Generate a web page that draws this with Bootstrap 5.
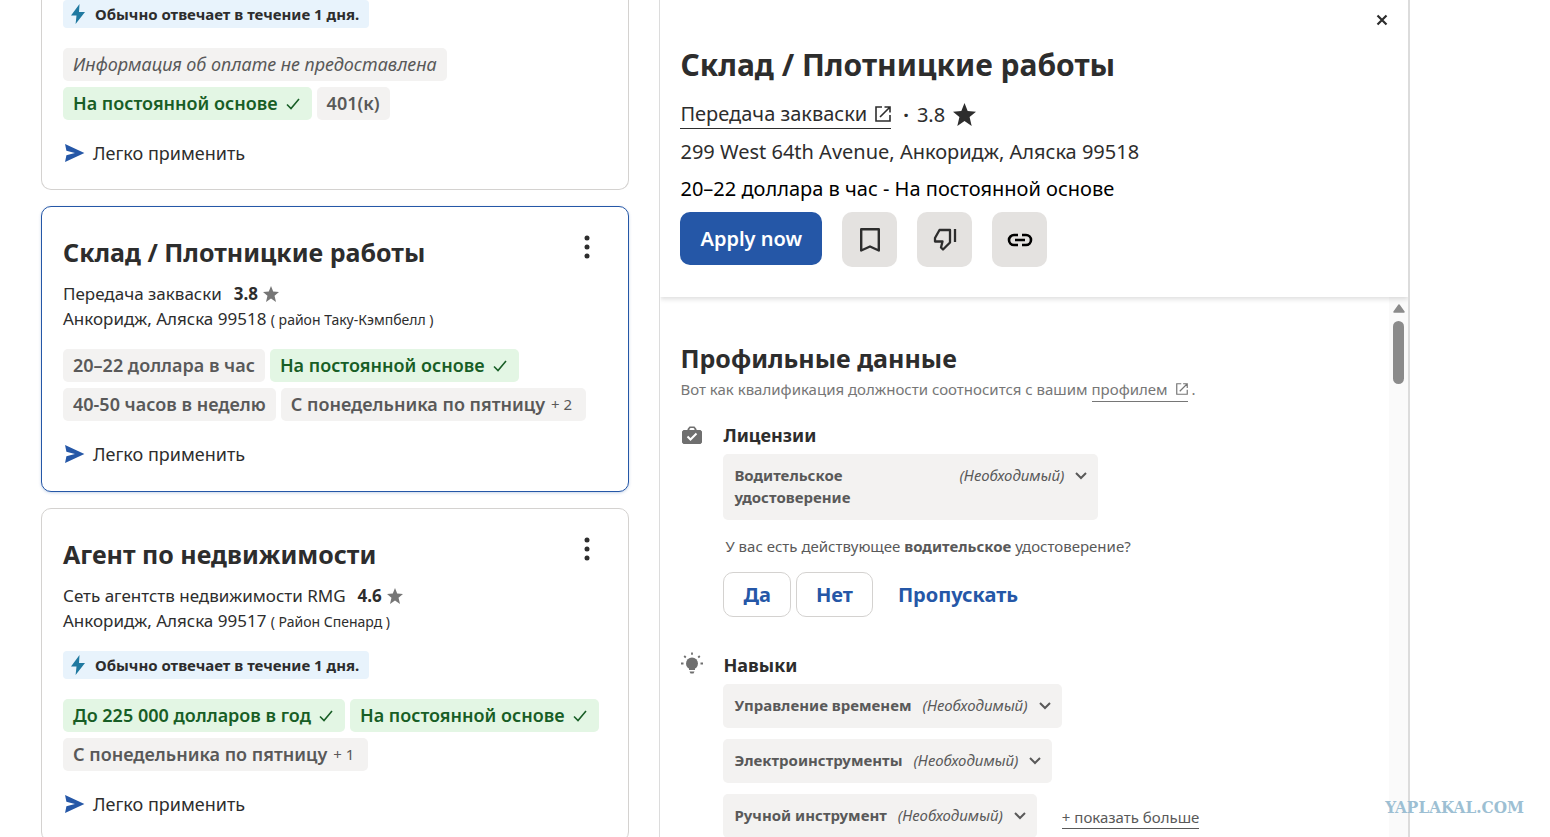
<!DOCTYPE html>
<html lang="ru">
<head>
<meta charset="utf-8">
<meta name="viewport" content="width=device-width, initial-scale=1">
<title>Вакансии</title>
<link href="https://cdn.jsdelivr.net/npm/bootstrap@5.3.0/dist/css/bootstrap.min.css" rel="stylesheet">
<style>
  :root { --ink: #2d2d2d; --soft: #595959; --line: #d4d2d0; --brand: #2557a7; --chip: #f3f2f1; }
  body { font-family: "Noto Sans", "Open Sans", sans-serif; color: var(--ink); background: #fff; }
  svg { flex: none; display: block; }
  h1, h2, h3, p { margin: 0; }
  .jobs-page { height: 100vh; overflow: hidden; display: grid; grid-template-columns: 588fr 750fr; column-gap: 30px; padding: 0 140px 0 41px; }
  .job-list { display: flex; flex-direction: column; gap: 16px; min-width: 0; }
  .job-card { flex: none; border: 1px solid var(--line); border-radius: 10px; padding: 26px 21px 24px; background: #fff; }
  .job-card.is-cut { border-top: 0; border-radius: 0 0 10px 10px; padding-top: 0; padding-bottom: 23px; }
  .job-card.is-active { border-color: var(--brand); box-shadow: 0 1px 3px rgba(37, 87, 167, .25); }
  .job-title { font-size: 25px; line-height: 38px; font-weight: 700; margin-bottom: 10px; }
  .company { font-size: 17px; line-height: 25px; }
  .company b { margin: 0 5px 0 12px; }
  .district { font-size: 14px; }
  .kebab { width: 40px; height: 28px; padding: 0; border: 0; background: none; display: flex; justify-content: center; align-items: center; color: var(--ink); }
  .reply { display: flex; width: fit-content; align-items: center; gap: 8px; height: 28px; padding: 0 10px 0 6px; border-radius: 4px; background: #e8f3fc; font-size: 15px; font-weight: 700; }
  .company + .reply, .company + .tags { margin-top: 17px; }
  .tags { display: flex; flex-wrap: wrap; gap: 6px 5px; }
  .reply + .tags { margin-top: 20px; }
  .tag { display: inline-flex; align-items: center; height: 33px; padding: 0 10px; border-radius: 5px; background: var(--chip); color: var(--soft); font-size: 18px; font-weight: 600; white-space: nowrap; }
  .tag.match { background: #e3f6e4; color: #185e26; }
  .tag svg { margin: 0 2px 0 8px; }
  .tag .more { font-size: 15px; font-weight: 400; margin: 0 4px 0 6px; }
  .tag.unpaid { font-style: italic; font-weight: 400; }
  .easy { display: flex; align-items: center; gap: 7px; margin-top: 20px; font-size: 18px; line-height: 26px; }
  .detail { display: flex; flex-direction: column; min-width: 0; border: solid #dcdcdc; border-width: 0 2px 0 1px; }
  .detail-head { position: relative; z-index: 1; flex: none; padding: 42px 20px 30px; box-shadow: 0 2px 5px rgba(0, 0, 0, .14); clip-path: inset(0 0 -10px 0); }
  .detail-title { font-size: 30px; line-height: 46px; font-weight: 700; margin-bottom: 12px; }
  .detail-line { font-size: 20px; line-height: 28px; margin-bottom: 9px; }
  .underlined { display: inline-flex; align-items: center; color: inherit; text-decoration: none; border-bottom: 1px solid currentColor; }
  .close-btn { position: absolute; top: 8px; right: 14px; width: 24px; height: 24px; border: 0; padding: 0; background: none; display: flex; align-items: center; justify-content: center; }
  .actions { display: flex; gap: 20px; }
  .apply { height: 53px; padding: 0 20px; border: 0; border-radius: 10px; background: var(--brand); color: #fff; font-size: 20px; font-weight: 600; }
  .tool { width: 55px; height: 55px; padding: 0; border: 0; border-radius: 10px; background: #e4e2e0; color: var(--ink); display: flex; align-items: center; justify-content: center; }
  .detail-body { flex: 1; min-height: 0; display: flex; overflow: hidden; }
  .profile { flex: 1; min-width: 0; padding: 42px 20px 0; }
  .rail { flex: none; width: 19px; background: #fafafa; padding-top: 7px; display: flex; flex-direction: column; align-items: center; gap: 8px; }
  .rail-thumb { width: 11px; height: 63px; border-radius: 6px; background: #8b8b8b; }
  .profile-title { font-size: 25px; line-height: 38px; font-weight: 700; }
  .hint { font-size: 15px; line-height: 24px; color: #767676; }
  .group { display: flex; gap: 20px; margin-top: 20px; }
  .group + .group { margin-top: 35px; }
  .group-icon { width: 23px; display: flex; justify-content: center; }
  .group-name { font-size: 18px; line-height: 26px; font-weight: 700; margin-bottom: 6px; }
  .need-list { display: grid; gap: 11px; }
  .need { display: flex; align-items: flex-start; width: fit-content; min-height: 44px; padding: 10px 11px 12px; border: 0; border-radius: 5px; background: var(--chip); color: var(--soft); font-size: 15px; line-height: 22px; text-align: left; }
  .need b { font-weight: 700; margin-right: 11px; }
  .need svg { margin: 8px 0 0 11px; }
  .need.wide { width: 375px; }
  .need.wide b { width: 140px; margin-right: auto; }
  .question { font-size: 15px; line-height: 22px; color: var(--soft); padding-left: 2px; margin: 15px 0; }
  .answers { display: flex; gap: 5px; }
  .answer { height: 45px; padding: 0 19px; border: 1px solid var(--line); border-radius: 10px; background: #fff; color: var(--brand); font-size: 20px; font-weight: 700; }
  .answer.plain { border-color: transparent; }
  .more-link { font-size: 15px; line-height: 22px; color: var(--soft); margin: 2px 0 0 25px; }
  .watermark { position: absolute; right: 26px; bottom: 19px; font: 700 17px/22px "DejaVu Serif Condensed", "DejaVu Serif", serif; color: #9dbfd3; }
</style>
</head>
<body>
<svg width="0" height="0" class="position-absolute">
  <symbol id="bolt" viewBox="0 0 16 20"><path d="M9.5 0 1 11.5h5.5L5.600 20 15 8H9z" fill="#2079a0"/></symbol>
  <symbol id="check" viewBox="0 0 14 12"><path d="M1 6.500 5 10.500 13 1" fill="none" stroke="currentColor" stroke-width="1.600"/></symbol>
  <symbol id="plane" viewBox="0 0 22 20"><path d="M.5 0 22 10 .5 20 2 12.500 11.500 10 2 7.500z" fill="#2557a7"/></symbol>
  <symbol id="star" viewBox="0 0 24 24"><path d="m12 0 3.300 8.300 8.700.7-6.700 5.700L19.500 24 12 18.800 4.500 24l2.200-9.300L0 9l8.700-.7z" fill="currentColor"/></symbol>
  <symbol id="dots" viewBox="0 0 6 24"><g fill="currentColor"><circle cx="3" cy="3" r="2.500"/><circle cx="3" cy="12" r="2.500"/><circle cx="3" cy="21" r="2.500"/></g></symbol>
  <symbol id="out" viewBox="0 0 16 16"><path d="M7 1H1v14h14V9M9.500 1H15v5.500M15 1 5 11" fill="none" stroke="currentColor" stroke-width="1.600"/></symbol>
  <symbol id="down" viewBox="0 0 12 8"><path d="m1 1 5 5 5-5" fill="none" stroke="currentColor" stroke-width="2"/></symbol>
</svg>

<main class="jobs-page position-relative">
  <section class="job-list" aria-label="Список вакансий">
    <article class="job-card is-cut">
      <div class="reply"><svg width="18" height="20"><use href="#bolt"/></svg>Обычно отвечает в течение 1 дня.</div>
      <div class="tags">
        <span class="tag unpaid">Информация об оплате не предоставлена</span>
        <span class="tag match">На постоянной основе<svg width="14" height="12"><use href="#check"/></svg></span>
        <span class="tag">401(к)</span>
      </div>
      <div class="easy"><svg width="23" height="18"><use href="#plane"/></svg>Легко применить</div>
    </article>

    <article class="job-card is-active">
      <div class="d-flex justify-content-between">
        <h2 class="job-title">Склад / Плотницкие работы</h2>
        <button class="kebab" type="button" aria-label="Ещё"><svg width="6" height="24"><use href="#dots"/></svg></button>
      </div>
      <div class="company d-flex align-items-center">Передача закваски<b>3.8</b><svg width="16" height="16" color="#767676"><use href="#star"/></svg></div>
      <div class="company">Анкоридж, Аляска 99518 <span class="district">( район Таку-Кэмпбелл )</span></div>
      <div class="tags">
        <span class="tag">20–22 доллара в час</span>
        <span class="tag match">На постоянной основе<svg width="14" height="12"><use href="#check"/></svg></span>
        <span class="tag">40-50 часов в неделю</span>
        <span class="tag">С понедельника по пятницу<span class="more">+ 2</span></span>
      </div>
      <div class="easy"><svg width="23" height="18"><use href="#plane"/></svg>Легко применить</div>
    </article>

    <article class="job-card">
      <div class="d-flex justify-content-between">
        <h2 class="job-title">Агент по недвижимости</h2>
        <button class="kebab" type="button" aria-label="Ещё"><svg width="6" height="24"><use href="#dots"/></svg></button>
      </div>
      <div class="company d-flex align-items-center">Сеть агентств недвижимости RMG<b>4.6</b><svg width="16" height="16" color="#767676"><use href="#star"/></svg></div>
      <div class="company">Анкоридж, Аляска 99517 <span class="district">( Район Спенард )</span></div>
      <div class="reply"><svg width="18" height="20"><use href="#bolt"/></svg>Обычно отвечает в течение 1 дня.</div>
      <div class="tags">
        <span class="tag match">До 225 000 долларов в год<svg width="14" height="12"><use href="#check"/></svg></span>
        <span class="tag match">На постоянной основе<svg width="14" height="12"><use href="#check"/></svg></span>
        <span class="tag">С понедельника по пятницу<span class="more">+ 1</span></span>
      </div>
      <div class="easy"><svg width="23" height="18"><use href="#plane"/></svg>Легко применить</div>
    </article>
  </section>

  <section class="detail" aria-label="Описание вакансии">
    <header class="detail-head">
      <button class="close-btn" type="button" aria-label="Закрыть"><svg width="12" height="12" viewBox="0 0 12 12"><path d="m1.500 1.500 9 9m0-9-9 9" stroke="#2d2d2d" stroke-width="2.200"/></svg></button>
      <h1 class="detail-title">Склад / Плотницкие работы</h1>
      <div class="detail-line d-flex align-items-center">
        <a href="#" class="underlined">Передача закваски<svg class="ms-2" width="16" height="16"><use href="#out"/></svg></a>
        <b class="ms-2 me-2 ps-1">·</b>3.8<svg class="ms-2" width="23" height="23"><use href="#star"/></svg>
      </div>
      <p class="detail-line">299 West 64th Avenue, Анкоридж, Аляска 99518</p>
      <p class="detail-line text-black">20–22 доллара в час - На постоянной основе</p>
      <div class="actions">
        <button class="apply" type="button">Apply now</button>
        <button class="tool" type="button" aria-label="Сохранить"><svg width="20" height="24" viewBox="0 0 20 24"><path d="M1.200 1.200h17.600V22.500L10 18.500l-8.800 4z" fill="none" stroke="currentColor" stroke-width="2.400" stroke-linejoin="round"/></svg></button>
        <button class="tool" type="button" aria-label="Не интересно"><svg width="24" height="24" viewBox="0 0 24 24"><path d="M17 2H6.500L2 10V13.500H9.500L8 19.500 10 21.500 17 14.500zM22 1v13" fill="none" stroke="currentColor" stroke-width="2.300" stroke-linejoin="round"/></svg></button>
        <button class="tool" type="button" aria-label="Копировать ссылку"><svg width="26" height="14" viewBox="0 0 26 14"><path d="M11 2H7a5 5 0 0 0 0 10h4M15 2h4a5 5 0 0 1 0 10h-4M8 7h10" fill="none" stroke="#000" stroke-width="2.600"/></svg></button>
      </div>
    </header>

    <div class="detail-body">
      <div class="profile">
        <h2 class="profile-title">Профильные данные</h2>
        <p class="hint">Вот как квалификация должности соотносится с вашим <a href="#" class="underlined">профилем<svg class="ms-2" width="12" height="12"><use href="#out"/></svg></a> .</p>

        <div class="group">
          <div class="group-icon pt-1"><svg width="20" height="18" viewBox="0 0 20 18"><path d="M1.500 4H5.500V3L7.500.5h5l2 2.500v1h4L20 5.500v11L18.500 18h-17L0 16.500v-11zM7.500 4h5V3l-1-1h-3l-1 1z" fill="#6f6f6f" fill-rule="evenodd"/><path d="m5.500 10.500 3 3L14.500 7.500" fill="none" stroke="#fff" stroke-width="2"/></svg></div>
          <div class="flex-grow-1">
            <h3 class="group-name">Лицензии</h3>
            <button class="need wide" type="button"><b>Водительское удостоверение</b><i>(Необходимый)</i><svg width="12" height="8"><use href="#down"/></svg></button>
            <p class="question">У вас есть действующее <b>водительское</b> удостоверение?</p>
            <div class="answers">
              <button class="answer" type="button">Да</button>
              <button class="answer" type="button">Нет</button>
              <button class="answer plain" type="button">Пропускать</button>
            </div>
          </div>
        </div>

        <div class="group">
          <div class="group-icon"><svg width="22" height="22" viewBox="0 0 22 22"><circle cx="11" cy="11.500" r="6" fill="#6f6f6f"/><path d="M8 16h6v2H8zM8.500 19.500h5L12.500 21.500h-3z" fill="#6f6f6f"/><path d="M11 .5v2.200M3.200 4 4.800 5.500M18.800 4 17.200 5.500M0 11.500h2.500M19.500 11.500H22" stroke="#6f6f6f" stroke-width="1.800"/></svg></div>
          <div class="flex-grow-1">
            <h3 class="group-name">Навыки</h3>
            <div class="need-list">
              <button class="need" type="button"><b>Управление временем</b><i>(Необходимый)</i><svg width="12" height="8"><use href="#down"/></svg></button>
              <button class="need" type="button"><b>Электроинструменты</b><i>(Необходимый)</i><svg width="12" height="8"><use href="#down"/></svg></button>
              <div class="d-flex align-items-center">
                <button class="need" type="button"><b>Ручной инструмент</b><i>(Необходимый)</i><svg width="12" height="8"><use href="#down"/></svg></button>
                <a href="#" class="underlined more-link">+ показать больше</a>
              </div>
            </div>
          </div>
        </div>
      </div>
      <div class="rail" aria-hidden="true">
        <svg width="12" height="9" viewBox="0 0 12 9"><path d="M6 1 11 8H1z" fill="#8b8b8b" stroke="#8b8b8b" stroke-width="1.500" stroke-linejoin="round"/></svg>
        <div class="rail-thumb"></div>
      </div>
    </div>
  </section>
  <div class="watermark">YAPLAKAL.COM</div>
</main>
<script src="https://cdn.jsdelivr.net/npm/bootstrap@5.3.0/dist/js/bootstrap.bundle.min.js"></script>
</body>
</html>
